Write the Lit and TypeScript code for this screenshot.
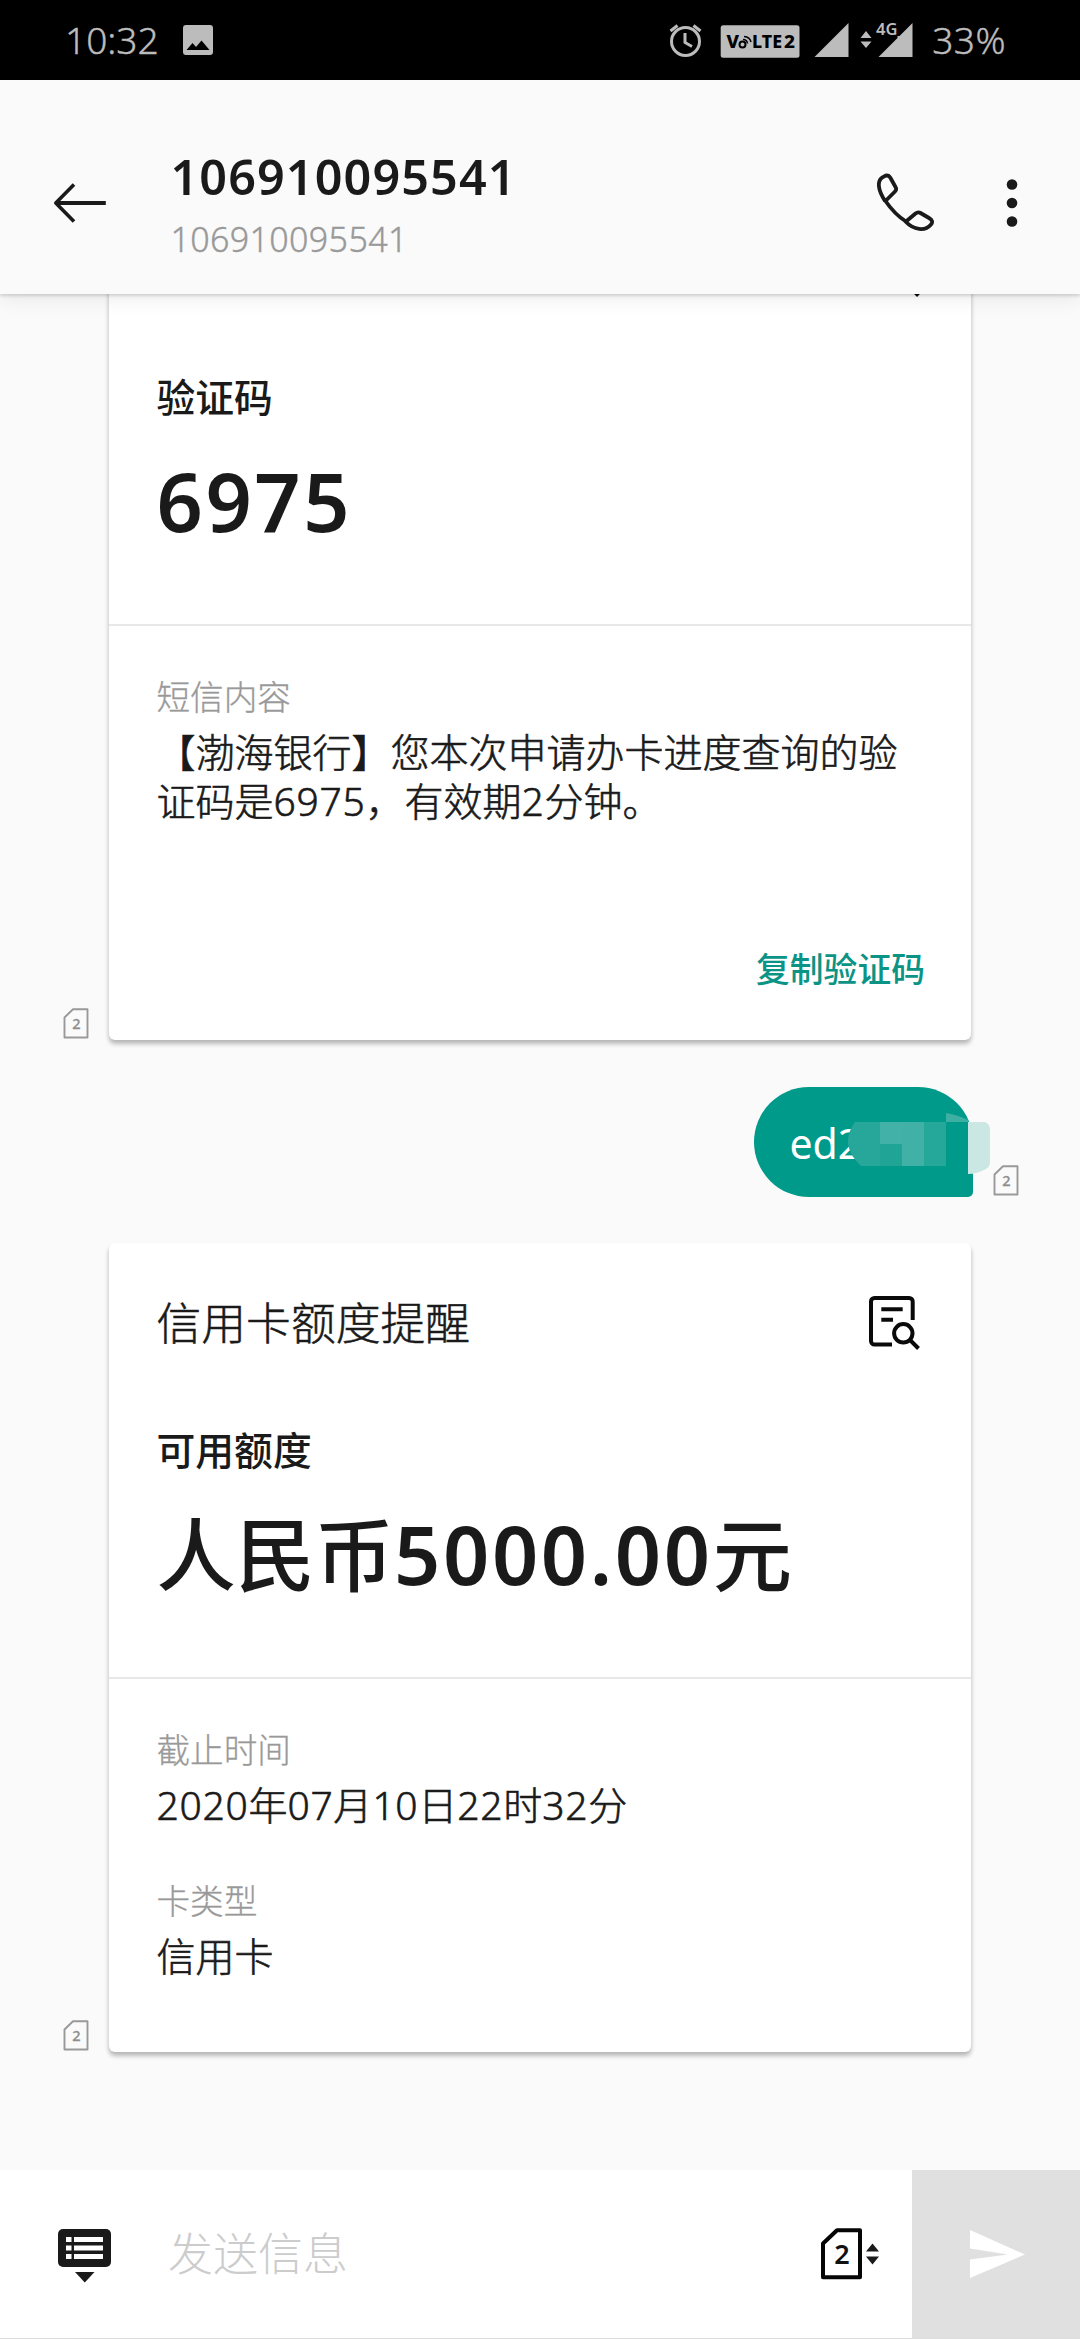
import { LitElement, html, svg, css, nothing } from "lit";
import { customElement, property } from "lit/decorators.js";

interface Field {
  label: string;
  lines: string[];
}

/** Splits a string so digit runs can carry their own tracking. */
const splitDigits = (s: string) =>
  s.split(/([0-9.]+)/).filter(Boolean).map((p) => html`<span class=${/[0-9]/.test(p) ? "num" : "zh"}>${p}</span>`);

/** Small SIM badge marking which card slot a message used. */
@customElement("sim-badge")
class SimBadge extends LitElement {
  @property() slotNumber = "2";
  static styles = css`
    :host { display: block; width: 26px; height: 31px; flex: none; }
    svg { display: block; }
    text { font: 500 14.5px "Noto Sans", sans-serif; fill: #8e8e8e; stroke: #8e8e8e; stroke-width: 0.3px; }
  `;
  render() {
    return html`<svg width="26" height="31" viewBox="0 0 26 31">
      <path d="M10 1.2H24.5V29.5H1.5V9.5Z" fill="none" stroke="#999" stroke-width="1.9" stroke-linejoin="round" />
      <text x="13.500" y="21" text-anchor="middle">${this.slotNumber}</text>
    </svg>`;
  }
}

/** Structured SMS card: heading, highlighted value, then detail fields. */
@customElement("sms-card")
class SmsCard extends LitElement {
  @property() heading = "";
  @property() caption = "";
  @property() value = "";
  @property() action = "";
  @property({ attribute: false }) fields: Field[] = [];
  static styles = css`
    :host {
      display: flex; flex-direction: column; width: 862px; box-sizing: border-box;
      background: #fff; border-radius: 6px; color: #1a1a1a;
      box-shadow: 0 4px 5px rgba(0, 0, 0, 0.2), 0 3px 4px rgba(0, 0, 0, 0.1);
    }
    .top { padding: 0 48px 66px 47.5px; border-bottom: 2px solid #e8e8e8; }
    .head { display: flex; align-items: center; justify-content: space-between; height: 159px; padding: 0 2px 0 0; }
    .head svg { margin-top: 1px; }
    .heading { font-size: 44.8px; font-weight: 300; line-height: 60px; padding-top: 1px; -webkit-text-stroke: 0.5px; }
    .caption { font-size: 38.8px; font-weight: 500; line-height: 96px; }
    .value { font-size: 79.2px; font-weight: 500; line-height: 113px; white-space: nowrap; }
    .value .num { font-size: 81px; font-weight: 600; letter-spacing: 2.6px; line-height: 1; }
    .details { display: flex; flex-direction: column; gap: 41px; padding: 41px 48px 71px 47.5px; }
    .label { font-size: 33.6px; font-weight: 300; line-height: 60px; color: #999; -webkit-text-stroke: 0.3px; }
    .text { font-size: 39px; font-weight: 300; line-height: 49px; padding-bottom: 1px; white-space: nowrap; -webkit-text-stroke: 0.6px; }
    .text .num { letter-spacing: 0.7px; }
    .details.with-action { padding-bottom: 0; }
    .action { display: flex; justify-content: flex-end; padding: 118px 46px 46px; color: #0b9485; font-size: 33.8px; font-weight: 500; line-height: 50px; }
  `;
  render() {
    return html`
      <div class="top">
        <div class="head">
          <span class="heading">${this.heading}</span>
          <svg width="54" height="56" viewBox="0 0 54 56" fill="none" stroke="#0a0a0a" stroke-width="4">
            <path d="M45.700 25V6.500A3.500 3.500 0 0 0 42.200 3H7.500A3.500 3.500 0 0 0 4 6.500V46A3.500 3.500 0 0 0 7.500 49.500H25" />
            <path d="M14.300 14.300H35.700M14.300 24.800H26M43 45L51.500 53.500" />
            <circle cx="36.300" cy="38.300" r="9.200" />
          </svg>
        </div>
        <div class="caption">${this.caption}</div>
        <div class="value">${splitDigits(this.value)}</div>
      </div>
      <div class="details ${this.action ? "with-action" : ""}">
        ${this.fields.map((f) => html`<div>
          <div class="label">${f.label}</div>
          <div class="text">${f.lines.map((l) => html`<div>${splitDigits(l)}</div>`)}</div>
        </div>`)}
      </div>
      ${this.action ? html`<div class="action">${this.action}</div>` : nothing}
    `;
  }
}

const MOSAIC = [
  { d: "M7 26Q1 34 0 43V48Q2 60 13 70H32V26Z", c: "#27a799" },
  { d: "M32 26H54V48H32Z", c: "#42b1a7" },
  { d: "M32 48H54V70H32Z", c: "#1fa496" },
  { d: "M54 26H76V70H54Z", c: "#41b1a8" },
  { d: "M76 26H98V70H76Z", c: "#25a79a" },
  { d: "M98 17Q110 19 120 24V26H98Z", c: "#3eb0a3" },
  { d: "M120 26H137Q142 28 142 34V66Q142 71 138 73Q129 78 120 78Z", c: "#cae7e4" },
];

@customElement("app-root")
class AppRoot extends LitElement {
  static styles = css`
    :host {
      display: flex; flex-direction: column; width: 1080px; height: 2339px; overflow: hidden;
      background: #fafafa; font-family: "Noto Sans", "Noto Sans CJK SC", sans-serif; color: #1a1a1a;
    }
    svg { display: block; flex: none; }
    .status { display: flex; align-items: center; height: 80px; background: #000; color: #bcbcbc; padding: 0 74px 0 65px; flex: none; font-size: 37px; font-weight: 300; line-height: 80px; -webkit-text-stroke: 0.4px; }
    .status svg { -webkit-text-stroke: 0; }
    .time { width: 118px; }
    .spacer { flex: 1; }
    .volte { font: 800 17px "Noto Sans", sans-serif; }
    .net { font: 600 16px "Noto Sans", sans-serif; }
    .battery { margin-left: 18px; letter-spacing: 0.5px; }
    .header { position: relative; z-index: 1; display: flex; align-items: center; height: 214px; box-sizing: border-box; padding: 32px 57px 0 53px; background: #fafafa; flex: none; box-shadow: 0 2px 3px rgba(0, 0, 0, 0.14), 0 6px 18px rgba(0, 0, 0, 0.07); }
    .who { flex: 1; padding: 0 0 0 63.5px; }
    .name { font-size: 48.5px; font-weight: 600; line-height: 66px; letter-spacing: 1.1px; }
    .number { font-size: 34px; font-weight: 300; line-height: 50px; padding-top: 5px; letter-spacing: 0.35px; color: #999; -webkit-text-stroke: 0.4px; }
    .dots { margin-left: 66px; }
    .thread { flex: 1; min-height: 0; display: flex; flex-direction: column; justify-content: flex-end; gap: 46px; padding-bottom: 118px; }
    .row { display: flex; align-items: flex-end; padding-left: 63px; flex: none; }
    .row sim-badge { margin: 0 20px 1px 0; }
    .row.sent { justify-content: flex-end; padding: 0 61px 0 0; margin-top: 1px; }
    .row.sent sim-badge { margin: 0 0 1px 20px; }
    .bubble { position: relative; width: 219px; height: 110px; box-sizing: border-box; padding-left: 35.5px; border-radius: 55px 55px 5px 55px; background: #009a8b; color: #fff; font-size: 41px; line-height: 112px; }
    .mosaic { position: absolute; left: 94px; top: 9px; }
    .composer { display: flex; align-items: center; height: 169px; flex: none; box-sizing: border-box; border-bottom: 1px solid #ddd; background: #fff; }
    .kbd { margin-left: 58px; margin-top: 4px; }
    .hint { flex: 1; padding-left: 56px; font-size: 45px; font-weight: 300; line-height: 60px; color: #ccc; }
    .simnum { font: 600 27px "Noto Sans", sans-serif; }
    .send { display: flex; align-items: center; justify-content: center; width: 168px; height: 168px; margin-left: 32px; background: #e0e0e0; }
  `;

  private statusBar() {
    return html`<div class="status">
      <span class="time">10:32</span>
      <svg width="30" height="30" viewBox="0 0 30 30">
        <path fill="#bcbcbc" fill-rule="evenodd" d="M3 0H27Q30 0 30 3V27Q30 30 27 30H3Q0 30 0 27V3Q0 0 3 0ZM3.500 25H26.500L18.500 15.500L13 22L9.500 18Z" />
      </svg>
      <span class="spacer"></span>
      <svg width="245" height="52" viewBox="669 14 245 52" fill="#bcbcbc">
        <g fill="none" stroke="#bcbcbc" stroke-width="3">
          <circle cx="685.500" cy="41.500" r="14" />
          <path d="M685 33V42.500L692 46.500M670.500 31L677.500 25.500M700.500 31L693.500 25.500" />
        </g>
        <rect x="720.700" y="25.300" width="78.800" height="32.500" rx="2.500" />
        <g class="volte" fill="#000">
          <text x="726.500" y="48" textLength="12.500" lengthAdjust="spacingAndGlyphs">V</text>
          <text x="752" y="48" textLength="30" lengthAdjust="spacingAndGlyphs">LTE</text>
          <text x="784" y="48" textLength="11" lengthAdjust="spacingAndGlyphs">2</text>
        </g>
        <g fill="none" stroke="#000">
          <circle cx="742.500" cy="44.500" r="3" stroke-width="2" />
          <path d="M743 39.500Q747 39.500 747.500 43.500M744 36.500Q750 37 751 42" stroke-width="1.500" />
        </g>
        <path d="M848.500 23V57H814.500Z" />
        <path d="M860.500 38L866 31L871.500 38ZM860.500 41.500L866 48L871.500 41.500Z" />
        <path d="M912.500 23V57H878.500L897.500 38V36H899.500Z" />
        <text class="net" x="876" y="34.800" textLength="21.500" lengthAdjust="spacingAndGlyphs">4G</text>
      </svg>
      <span class="battery">33%</span>
    </div>`;
  }

  private header() {
    return html`<div class="header">
      <svg width="54" height="42" viewBox="0 0 54 42" fill="none" stroke="#1a1a1a">
        <path d="M3 21H52.800" stroke-width="4" />
        <path d="M21 2.500L2.800 21L21 39.500" stroke-width="3.600" stroke-linejoin="round" />
      </svg>
      <div class="who">
        <div class="name">106910095541</div>
        <div class="number">106910095541</div>
      </div>
      <svg width="58" height="60" viewBox="877 173 58 60" fill="none" stroke="#1a1a1a" stroke-width="3.800" stroke-linejoin="round">
        <path d="M885 201C878 190 876 180 884 176.500Q888 174 890.500 178L895.500 187Q897 189.500 895 191.500L885.500 201C891 209 898 216.500 906 221.500L915.500 213.500Q918 211.500 920.500 213L929 218Q934 221 931 224.500C925 231.500 914 230.500 905 221" />
      </svg>
      <svg class="dots" width="22" height="50" viewBox="0 0 22 50" fill="#1a1a1a">
        <circle cx="11" cy="6.500" r="5.300" /><circle cx="11" cy="25" r="5.300" /><circle cx="11" cy="43.500" r="5.300" />
      </svg>
    </div>`;
  }

  private composer() {
    return html`<div class="composer">
      <svg class="kbd" width="54" height="54" viewBox="0 0 54 54">
        <rect width="53" height="38" rx="5" fill="#1a1a1a" />
        <path d="M17 43H36.500L26.800 53.500Z" fill="#1a1a1a" />
        <path d="M8 8H13.500V13H8ZM16 8H45V13H16ZM8 16.500H13.500V21.500H8ZM16 16.500H45V21.500H16ZM8 25H13.500V30H8ZM16 25H45V30H16Z" fill="#fff" />
      </svg>
      <div class="hint">发送信息</div>
      <svg width="59" height="52" viewBox="0 0 59 52">
        <path d="M16 2.200H39V49.300H2V15.500Z" fill="none" stroke="#050505" stroke-width="4" stroke-linejoin="round" />
        <text class="simnum" x="21" y="35.500" text-anchor="middle" fill="#111">2</text>
        <path d="M45 23.500L51.500 15.500L58 23.500ZM45 28.500L51.500 36.500L58 28.500Z" fill="#1a1a1a" />
      </svg>
      <div class="send">
        <svg width="54" height="50" viewBox="-1 0 54 50" overflow="visible"><path d="M0 1L55 25.500L0 49V30.500L38 25.500L0 19.500Z" fill="#fff" /></svg>
      </div>
    </div>`;
  }

  render() {
    return html`
      ${this.statusBar()} ${this.header()}
      <div class="thread">
        <div class="row">
          <sim-badge></sim-badge>
          <sms-card heading="" caption="验证码" value="6975" action="复制验证码"
            .fields=${[{ label: "短信内容", lines: ["【渤海银行】您本次申请办卡进度查询的验", "证码是6975，有效期2分钟。"] }]}></sms-card>
        </div>
        <div class="row sent">
          <div class="bubble">ed2
            <svg class="mosaic" width="142" height="80" viewBox="0 0 142 80">
              ${MOSAIC.map((m) => svg`<path d=${m.d} fill=${m.c} />`)}
            </svg>
          </div>
          <sim-badge></sim-badge>
        </div>
        <div class="row">
          <sim-badge></sim-badge>
          <sms-card heading="信用卡额度提醒" caption="可用额度" value="人民币5000.00元"
            .fields=${[
              { label: "截止时间", lines: ["2020年07月10日22时32分"] },
              { label: "卡类型", lines: ["信用卡"] },
            ]}></sms-card>
        </div>
      </div>
      ${this.composer()}
    `;
  }
}
